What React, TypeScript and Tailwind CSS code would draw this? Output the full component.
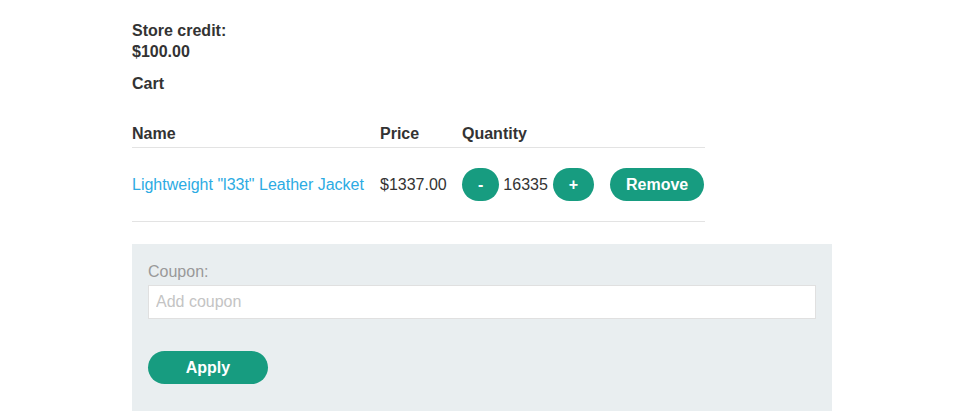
export default function App() {
  return (
    <div className="min-h-[411px] bg-white font-['Liberation_Sans',Arial,sans-serif] text-[16px] text-[#333333]">
      <div className="ml-[132px] w-[700px] pt-[20px]">
        {/* Store credit */}
        <p className="font-bold leading-[21px]">Store credit:</p>
        <p className="font-bold leading-[21px]">$100.00</p>
        <h2 className="mt-[11px] font-bold leading-[21px]">Cart</h2>

        {/* Cart table */}
        <div className="mt-[25px] w-[573px]">
          <div className="flex h-[29px] items-start border-b border-[#e3e3e3] pt-[4px] font-bold leading-[21px]">
            <div className="w-[248px]">Name</div>
            <div className="w-[82px]">Price</div>
            <div className="w-[148px]">Quantity</div>
            <div className="flex-1"></div>
          </div>
          <div className="flex h-[74px] items-center border-b border-[#e3e3e3] leading-[21px]">
            <div className="w-[248px]">
              <a href="#" className="text-[#2cabe3]">
                Lightweight "l33t" Leather Jacket
              </a>
            </div>
            <div className="w-[82px]">$1337.00</div>
            <div className="flex w-[148px] items-center">
              <button className="h-[33px] rounded-full bg-[#179c80] px-4 font-bold text-white">
                -
              </button>
              <span className="ml-[4px] mr-[5px]">16335</span>
              <button className="h-[33px] rounded-full bg-[#179c80] px-4 font-bold text-white">
                +
              </button>
            </div>
            <div className="flex-1">
              <button className="h-[33px] rounded-full bg-[#179c80] px-4 font-bold text-white">
                Remove
              </button>
            </div>
          </div>
        </div>

        {/* Coupon */}
        <div className="mt-[22px] bg-[#e9eef0] px-4 pb-[32px] pt-[17px]">
          <label className="block leading-[21px] text-[#999999]">Coupon:</label>
          <input
            type="text"
            placeholder="Add coupon"
            className="mt-[3px] block h-[34px] w-full border border-[#e0e0e0] bg-white px-[7px] text-[16px] outline-none placeholder:text-[#c4c4c4]"
          />
          <button className="mt-[32px] h-[33px] w-[120px] rounded-full bg-[#179c80] font-bold text-white">
            Apply
          </button>
        </div>
      </div>
    </div>
  );
}
